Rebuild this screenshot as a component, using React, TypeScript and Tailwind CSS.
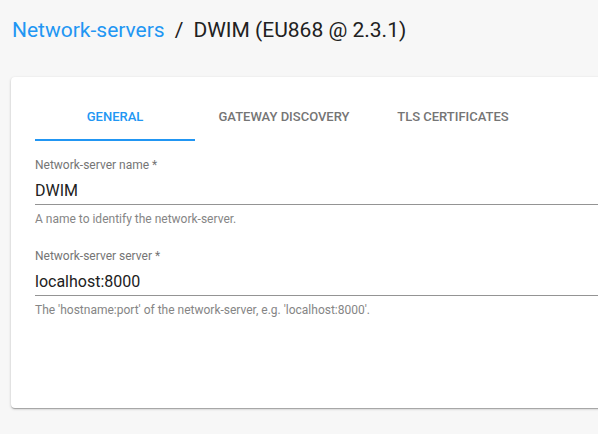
import React, { useState } from "react";

const tabs = [
  { id: "general", label: "General", width: "w-[160px]" },
  { id: "discovery", label: "Gateway discovery", width: "w-[178px]" },
  { id: "tls", label: "TLS certificates", width: "w-[160px]" },
];

function TextField({
  label,
  value,
  helper,
}: {
  label: string;
  value: string;
  helper: string;
}) {
  return (
    <div className="flex flex-col">
      <label className="text-[12px] leading-[16px] text-[#757575]">{label}</label>
      <div className="pt-[6px] pb-[1px] border-b border-[#949494]">
        <span className="text-[16px] leading-[19px] text-[#212121]">{value}</span>
      </div>
      <p className="mt-[6px] text-[12px] leading-[16px] text-[#858585]">{helper}</p>
    </div>
  );
}

export default function App() {
  const [active, setActive] = useState("general");

  return (
    <div
      className="h-[434px] w-[598px] overflow-hidden bg-[#f7f7f7] pt-[16px]"
      style={{ fontFamily: "Roboto, 'Liberation Sans', sans-serif" }}
    >
      {/* breadcrumb title */}
      <h1 className="pl-[12px] text-[21px] leading-[28px] text-[#212121]">
        <a className="text-[#2196f3]">Network-servers</a>
        <span className="mx-[10px]">/</span>
        DWIM (EU868 @ 2.3.1)
      </h1>

      <div className="mt-[33px] ml-[11px] w-[620px] h-[331px] rounded-[4px] bg-white px-[24px] pt-[16px] shadow-[0_1px_3px_rgba(0,0,0,0.2),0_1px_1px_rgba(0,0,0,0.14),0_2px_1px_-1px_rgba(0,0,0,0.12)]">
        <div className="flex h-[48px]">
          {tabs.map((t) => (
            <button
              key={t.id}
              onClick={() => setActive(t.id)}
              className={`${t.width} relative flex items-center justify-center text-[13px] font-medium uppercase tracking-normal ${
                active === t.id ? "text-[#2196f3]" : "text-[#757575]"
              }`}
            >
              {t.label}
              {active === t.id && (
                <span className="absolute bottom-0 left-0 right-0 h-[2px] bg-[#2196f3]" />
              )}
            </button>
          ))}
        </div>

        <div className="mt-[16px] w-[563px] flex flex-col gap-[21px]">
          <TextField
            label="Network-server name *"
            value="DWIM"
            helper="A name to identify the network-server."
          />
          <TextField
            label="Network-server server *"
            value="localhost:8000"
            helper="The 'hostname:port' of the network-server, e.g. 'localhost:8000'."
          />
        </div>
      </div>
    </div>
  );
}
